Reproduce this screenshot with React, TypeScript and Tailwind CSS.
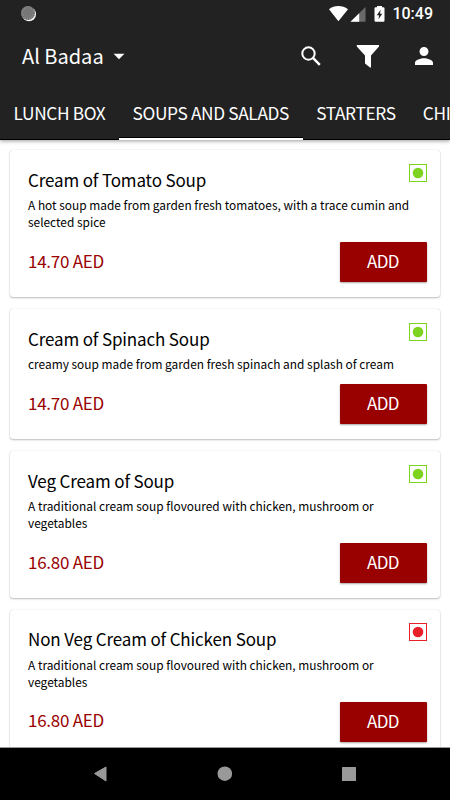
import { IoMdPerson } from 'react-icons/io'
import { MdArrowDropDown } from 'react-icons/md'

const tabs = ["LUNCH BOX", "SOUPS AND SALADS", "STARTERS", "CHINESE"]

const items = [
  {
    name: "Cream of Tomato Soup",
    description: "A hot soup made from garden fresh tomatoes, with a trace cumin and selected spice",
    price: "14.70 AED",
    veg: true,
  },
  {
    name: "Cream of Spinach Soup",
    description: "creamy soup made from garden fresh spinach and splash of cream",
    price: "14.70 AED",
    veg: true,
  },
  {
    name: "Veg Cream of Soup",
    description: "A traditional cream soup flovoured with chicken, mushroom or vegetables",
    price: "16.80 AED",
    veg: true,
  },
  {
    name: "Non Veg Cream of Chicken Soup",
    description: "A traditional cream soup flovoured with chicken, mushroom or vegetables",
    price: "16.80 AED",
    veg: false,
  },
]

const StatusBar = () => {
  return (
    <div className="flex h-7 items-center justify-between pl-[20px] pr-[17px]">
      <svg width="17" height="17" viewBox="0 0 17 17">
        <circle cx="9" cy="8.2" r="7" fill="#f5f5f5" />
        <circle cx="8" cy="7" r="7" fill="#8c8c8c" />
        <circle cx="8" cy="7" r="6" fill="none" stroke="#686868" strokeWidth="1.5" strokeDasharray="1 1" />
        <circle cx="8" cy="7" r="5" fill="#777" />
      </svg>
      <div className="flex items-center">
        <svg width="62" height="18" viewBox="328 4 62 18">
          <path d="M330 8.3C335 4 343.5 4 349 8.3L339.4 20.3Z" fill="#fff" />
          <path d="M366.5 6V20.8H351.5Z" fill="#6a6a6a" />
          <path d="M360.2 12.2V20.8H351.5Z" fill="#fff" />
          <path d="M378 5H383V6.3H384.3Q385.5 6.3 385.5 7.5V19.6Q385.5 20.8 384.3 20.8H376.7Q375.5 20.8 375.5 19.6V7.5Q375.5 6.3 376.7 6.3H378Z" fill="#fff" />
          <path d="M381.7 8.8L377.7 14.3H380.1L379.5 18.3L383.3 12.8H381Z" fill="#222" />
        </svg>
        <span className="ml-[3px] font-['Roboto'] text-[16px] font-medium leading-none text-white">10:49</span>
      </div>
    </div>
  )
}

const Toolbar = () => {
  return (
    <div className="flex h-[56px] items-center pl-[22px] pr-[14px]">
      <span className="pb-px text-[20px] leading-none">Al Badaa</span>
      <MdArrowDropDown className="ml-[2px] size-[26px]" />
      <svg className="ml-auto" width="22" height="22" viewBox="0 0 22 22" fill="none" stroke="#fff">
        <circle cx="8.5" cy="8.5" r="6.2" strokeWidth="2" />
        <path d="M13.2 13.2L19.8 19.8" strokeWidth="2.5" />
      </svg>
      <svg className="ml-[34px]" width="24" height="26" viewBox="0 0 24 26" fill="#fff">
        <path d="M0.8 2H23V3.5L15 12.5V24.5H14L9 20.5V12.5L0.8 3.5Z" />
      </svg>
      <IoMdPerson className="ml-[32px] size-[24px]" />
    </div>
  )
}

const FoodMark = ({ veg }: { veg: boolean }) => {
  const color = veg ? "#7ed321" : "#e8202a"
  return (
    <svg width="18" height="18" viewBox="0 0 18 18">
      <rect x="0.5" y="0.5" width="17" height="17" fill="none" stroke={color} />
      <circle cx="9" cy="9" r="5.3" fill={color} />
    </svg>
  )
}

const ItemCard = ({ item }: { item: any }) => {
  return (
    <div className="shrink-0 rounded-[3px] bg-white pb-[14.7px] pl-[18px] pr-[13.5px] pt-[13.5px] shadow-[0_1px_2px_rgba(0,0,0,0.25),0_0_1px_rgba(0,0,0,0.2)]">
      <div className="flex h-[33.4px] items-start justify-between">
        <h2 className="text-[17px] leading-[32px] tracking-[-0.14px]">{item.name}</h2>
        <FoodMark veg={item.veg} />
      </div>
      <p className="mr-[12px] text-[11.9px] leading-[16.8px]">{item.description}</p>
      <div className="mt-[11.6px] flex items-center justify-between">
        <span className="pb-[4px] text-[17px] leading-none tracking-[-0.25px] text-[#990000]">{item.price}</span>
        <button className="h-10 w-[87px] rounded-[1px] bg-[#990000] pb-[3px] text-[17px] leading-none tracking-[-0.6px] text-white shadow-[0_1px_2px_rgba(0,0,0,0.35)]">ADD</button>
      </div>
    </div>
  )
}

const App = () => {
  return (
    <div className="flex h-[800px] w-[450px] flex-col overflow-hidden bg-white font-['Noto_Sans_CJK_SC',sans-serif] text-black">
      <header className="z-10 h-[140px] shrink-0 bg-[#222] text-white shadow-[0_1px_4px_rgba(0,0,0,0.4)]">
        <StatusBar />
        <Toolbar />
        <nav className="flex h-[56px] overflow-hidden shadow-[inset_0_-1px_0_#000]">
          {tabs.map((tab, i) => (
            <div
              key={tab}
              className={`flex shrink-0 items-center border-b-2 px-[13.6px] pt-[3px] text-[17.3px] leading-none tracking-[-0.36px] whitespace-nowrap ${i === 1 ? "border-white shadow-[inset_0_-1px_0_#000]" : "border-transparent"}`}
            >
              {tab}
            </div>
          ))}
        </nav>
      </header>
      <main className="flex min-h-0 flex-1 flex-col gap-3 overflow-hidden px-[10px] pt-[10.4px]">
        {items.map((item) => <ItemCard key={item.name} item={item} />)}
      </main>
      <footer className="z-10 h-[53px] shrink-0 border-t border-[#999] bg-black">
        <svg width="450" height="52" viewBox="0 748 450 52" fill="#999">
          <path d="M94.5 773.5L106 767V781Z" stroke="#999" strokeLinejoin="round" />
          <circle cx="224.8" cy="773.7" r="7.3" />
          <rect x="342" y="767" width="14" height="14" rx="0.5" />
        </svg>
      </footer>
    </div>
  )
}

export default App
